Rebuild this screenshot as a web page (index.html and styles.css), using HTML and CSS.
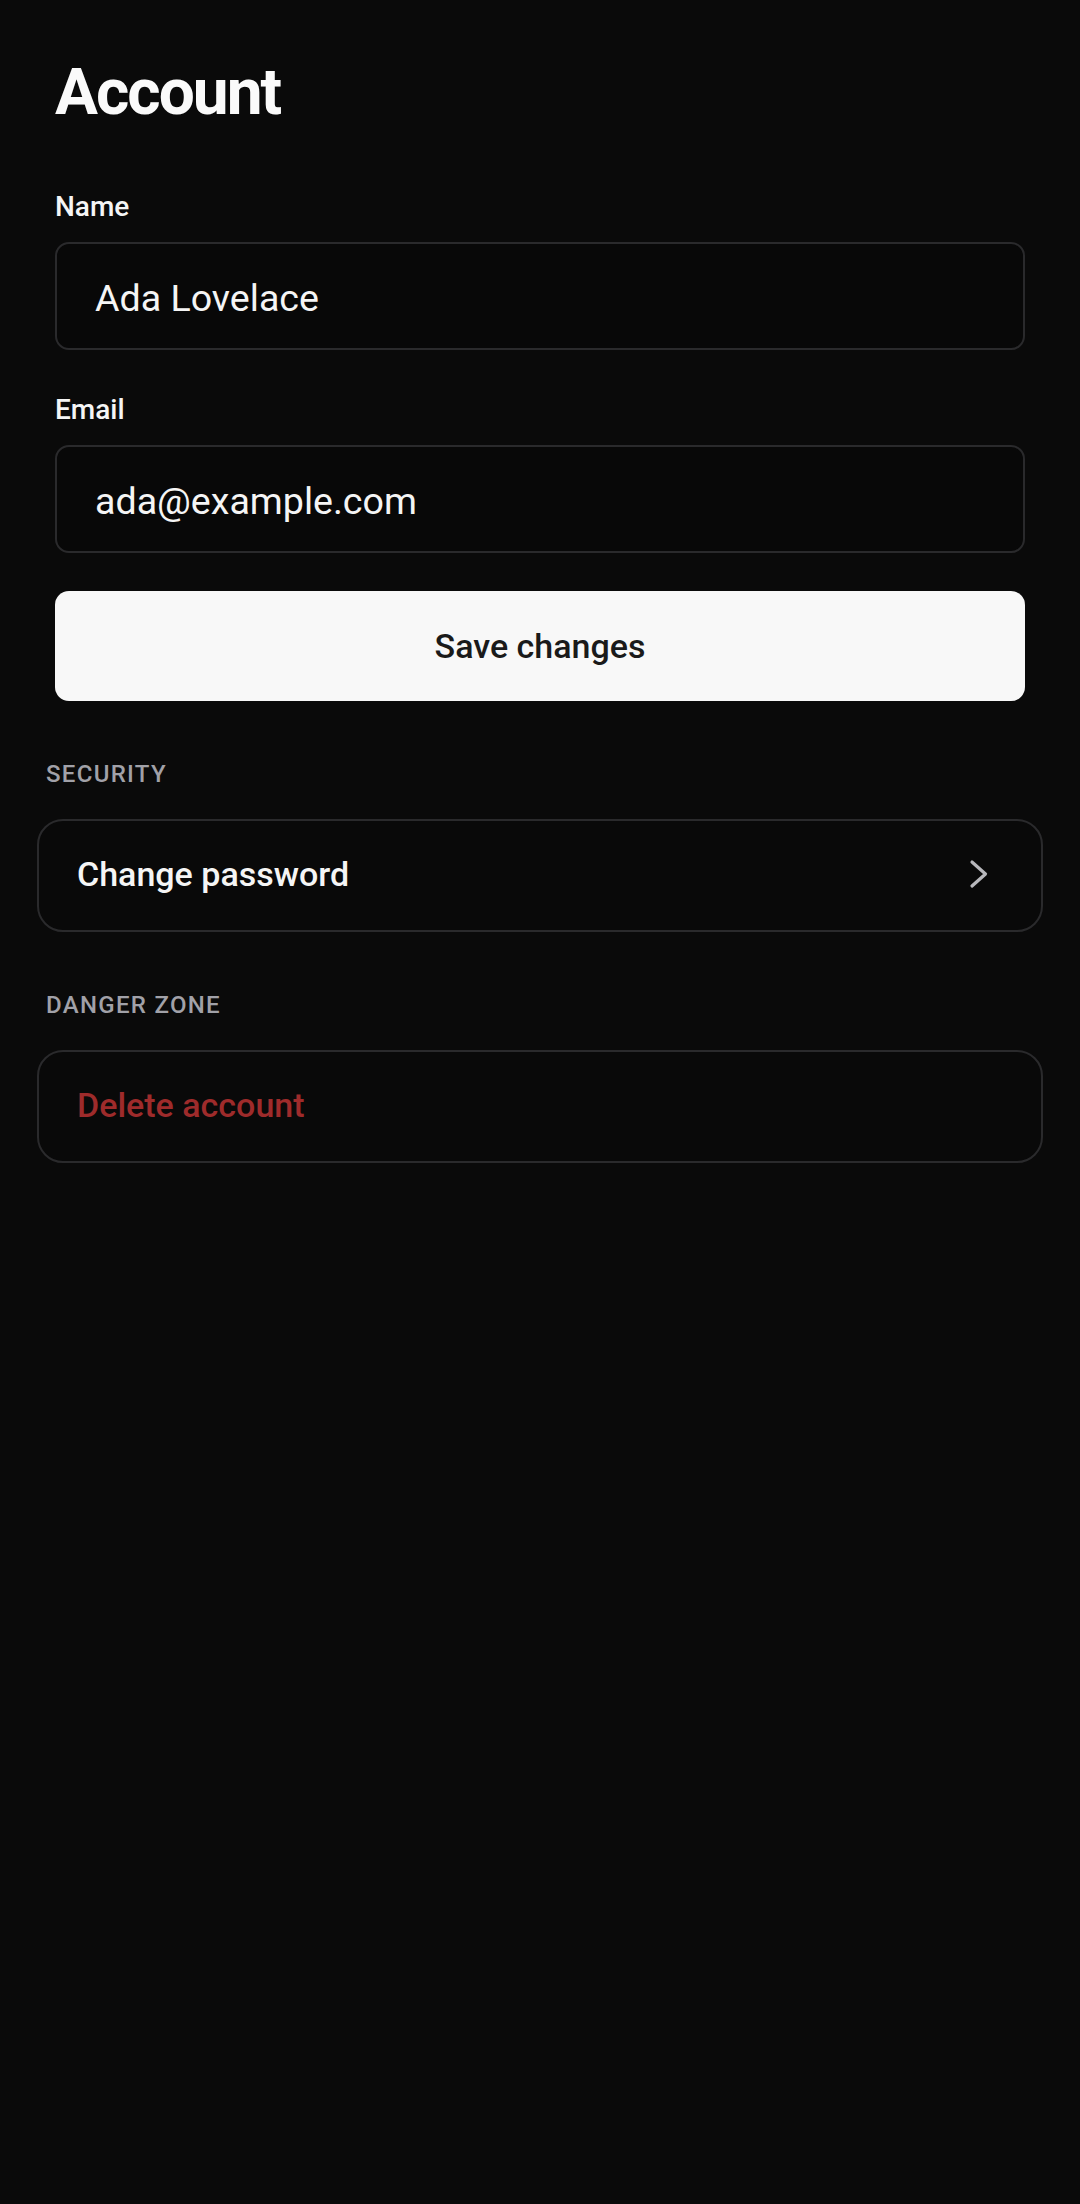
FILE: index.html
```html
<!DOCTYPE html>
<html lang="en">
<head>
    <meta charset="UTF-8">
    <title>Account</title>
    <link rel="stylesheet" href="styles.css">
</head>
<body>
    <main class="screen">
        <h1 class="page-title">Account</h1>

        <form class="profile-form">
            <div class="field">
                <label for="name-input">Name</label>
                <input id="name-input" class="text-input" type="text" value="Ada Lovelace">
            </div>
            <div class="field">
                <label for="email-input">Email</label>
                <input id="email-input" class="text-input" type="email" value="ada@example.com">
            </div>
            <button type="button" class="save-button">Save changes</button>
        </form>

        <section class="settings-group">
            <h2 class="group-title">Security</h2>
            <a class="row-card" href="#">
                <span>Change password</span>
                <svg class="chevron" width="20" height="30" viewBox="0 0 20 30">
                    <polyline points="3,3 16.5,15 3,27" fill="none" stroke="currentColor" stroke-width="3.2" stroke-linecap="round" stroke-linejoin="round"/>
                </svg>
            </a>
        </section>

        <section class="settings-group">
            <h2 class="group-title">Danger zone</h2>
            <a class="row-card danger" href="#">
                <span>Delete account</span>
            </a>
        </section>
    </main>
</body>
</html>
```

FILE: styles.css
```css
body {
    background-color: #0a0a0a;
    color: #f5f5f5;
    margin: 0;
    font-family: Roboto, "Liberation Sans", sans-serif;
}

.screen {
    padding: 55px 37px;
}

.page-title {
    margin: 0 18px;
    font-size: 64px;
    line-height: 76px;
    font-weight: 700;
    letter-spacing: -2px;
    color: #fafafa;
}

.profile-form {
    margin: 60px 18px 0;
    display: flex;
    flex-direction: column;
    gap: 44px;
}

.field {
    display: flex;
    flex-direction: column;
}

.field label {
    font-size: 28px;
    line-height: 32px;
    font-weight: 500;
    margin-bottom: 19px;
}

.text-input {
    height: 108px;
    box-sizing: border-box;
    width: 100%;
    padding: 3px 38px 0;
    background: #080808;
    border: 2px solid #2a2a2c;
    border-radius: 14px;
    color: #f5f5f5;
    font-family: Roboto, "Liberation Sans", sans-serif;
    font-size: 37.6px;
    outline: none;
}

.save-button {
    margin-top: -6px;
    height: 110px;
    border: none;
    border-radius: 14px;
    background: #f8f8f8;
    color: #1a1a1a;
    font-family: Roboto, "Liberation Sans", sans-serif;
    font-size: 34px;
    font-weight: 500;
    cursor: pointer;
}

.settings-group {
    margin-top: 59px;
}

.group-title {
    margin: 0 0 31px;
    padding: 0 9px;
    font-size: 24px;
    line-height: 28px;
    font-weight: 500;
    letter-spacing: 1.3px;
    text-transform: uppercase;
    color: #a1a1a8;
}

.row-card {
    display: flex;
    align-items: center;
    justify-content: space-between;
    height: 113px;
    box-sizing: border-box;
    padding: 0 52px 3px 38px;
    border: 2px solid #2a2a2c;
    border-radius: 26px;
    background: #090909;
    color: #f5f5f5;
    text-decoration: none;
    font-size: 34px;
    font-weight: 500;
}

.row-card.danger {
    color: #9e2b2b;
}

.chevron {
    color: #b8b8bc;
}
```
